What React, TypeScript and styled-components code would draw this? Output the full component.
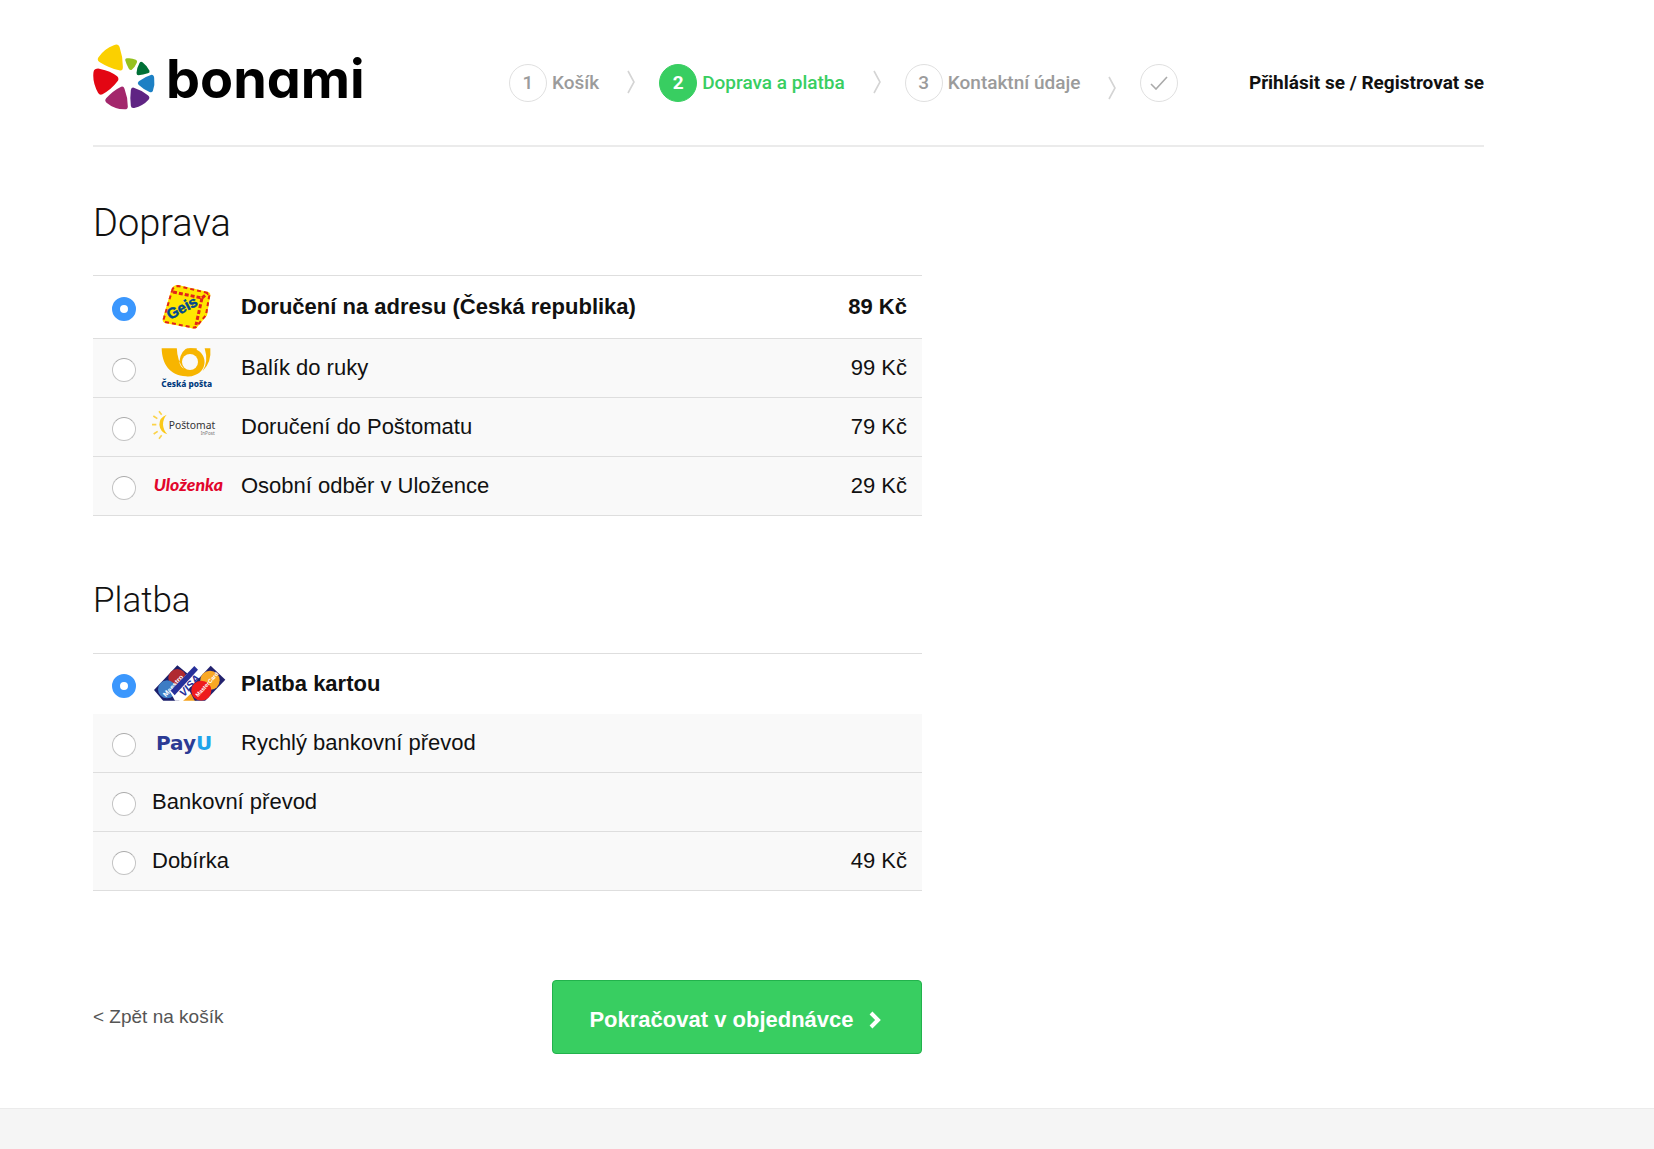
import React, { useState } from "react";
import styled, { createGlobalStyle } from "styled-components";

const GlobalStyle = createGlobalStyle`
  *, *::before, *::after { box-sizing: border-box; }
  html, body { margin: 0; background: #fff; }
  body {
    color: #111;
    font-family: "Liberation Sans", Arial, sans-serif;
    font-size: 22px;
    line-height: 28px;
  }
`;

const Page = styled.div`
  display: flex;
  flex-direction: column;
  min-height: 100vh;
`;

const Content = styled.div`
  padding: 0 170px 54px 93px;
`;

const Header = styled.header`
  display: flex;
  align-items: flex-start;
  padding: 44px 0 35px;
  border-bottom: 2px solid #ebebeb;
`;

const LogoLink = styled.a`
  display: flex;
  flex: none;
  align-items: center;
  gap: 10px;
  width: 271px;
  margin-right: 145px;
  color: #000;
  text-decoration: none;
`;

const Mark = styled.svg`
  flex: none;
  width: 63px;
  height: 66px;
`;

const Wordmark = styled.span`
  padding-top: 4px;
  font-family: Inter, sans-serif;
  font-feature-settings: "cv11";
  font-size: 54px;
  font-weight: 700;
  line-height: 60px;
`;

const Steps = styled.ol`
  display: flex;
  align-items: center;
  margin: 20px 0 0;
  padding: 0;
  list-style: none;
  font-family: Roboto, sans-serif;
  font-size: 19px;
  font-weight: 500;
  line-height: 28px;
`;

const Step = styled.li<{ $active?: boolean }>`
  display: flex;
  align-items: center;
  gap: 5px;
  color: ${(p) => (p.$active ? "#38ce61" : "#9b9b9b")};
  white-space: nowrap;
`;

const Bubble = styled.span<{ $active?: boolean }>`
  display: flex;
  align-items: center;
  justify-content: center;
  width: 38px;
  height: 38px;
  border: 1px solid ${(p) => (p.$active ? "#38ce61" : "#e0e0e0")};
  border-radius: 50%;
  background: ${(p) => (p.$active ? "#38ce61" : "#fff")};
  color: ${(p) => (p.$active ? "#fff" : "#9b9b9b")};
  font-weight: ${(p) => (p.$active ? 700 : 500)};
`;

const Separator = styled.svg<{ $low?: boolean }>`
  align-self: ${(p) => (p.$low ? "flex-end" : "center")};
  width: 8px;
  height: 24px;
  margin: 0 24px 2px 28px;
`;

const Login = styled.a`
  margin: 25px 0 0 auto;
  color: #111;
  font-family: Roboto, sans-serif;
  font-size: 19px;
  font-weight: 700;
  line-height: 28px;
  text-decoration: none;
  white-space: nowrap;
`;

const Form = styled.form`
  width: 60%;
  max-width: 829px;
`;

const Group = styled.section`
  padding-top: 52px;

  & + & {
    padding-top: 61px;
  }
`;

const Heading = styled.h2<{ $size: number }>`
  margin: 0;
  font-family: Roboto, sans-serif;
  font-size: ${(p) => p.$size}px;
  font-weight: 300;
  line-height: 48px;
`;

const Options = styled.div`
  margin-top: 28px;
  border-top: 1px solid #dedede;
`;

const Option = styled.label<{ $selected: boolean; $plain?: boolean; $height: number }>`
  display: flex;
  align-items: center;
  min-height: ${(p) => p.$height}px;
  padding: 0 15px 0 19px;
  border-bottom: ${(p) => (p.$plain ? "0" : "1px")} solid #dedede;
  background: ${(p) => (p.$selected ? "#fff" : "#f9f9f9")};
  font-weight: ${(p) => (p.$selected ? 700 : 400)};
  cursor: pointer;
`;

const Radio = styled.input`
  appearance: none;
  flex: none;
  width: 24px;
  height: 24px;
  margin: 3px 16px 0 0;
  border: 1px solid #c4c4c4;
  border-top-color: #aaa;
  border-radius: 50%;
  background: #fff;

  &:checked {
    border: 8px solid #3b97fd;
  }
`;

const Brand = styled.svg`
  flex: none;
  width: 72px;
  height: 48px;
  margin-right: 17px;
`;

const Price = styled.span`
  margin-left: auto;
`;

const Actions = styled.div`
  display: flex;
  align-items: center;
  justify-content: space-between;
  padding-top: 89px;
`;

const Back = styled.a`
  color: #555;
  font-size: 19px;
  text-decoration: none;
`;

const Submit = styled.button`
  display: flex;
  align-items: center;
  justify-content: center;
  gap: 15px;
  width: 370px;
  height: 74px;
  padding: 5px 4px 0 0;
  border: 1px solid #22b24c;
  border-radius: 4px;
  background: #38ce61;
  color: #fff;
  font: inherit;
  font-weight: 700;
  cursor: pointer;
`;

const Footer = styled.footer`
  flex: 1;
  border-top: 1px solid #ebebeb;
  background: #f5f5f5;
`;

const LogoMark = () => (
  <Mark viewBox="38 40 188 198" aria-hidden="true">
    <path fill="#fbd000" d="M100 44Q112 38 117 48Q128 80 127 113Q126 122 116 119Q85 112 58 95Q48 89 54 80Q72 54 100 44Z" />
    <path fill="#95c11f" d="M139 83Q153 81 166 87Q172 90 169 96Q164 108 154 117Q149 120 145 114Q137 100 134 88Q134 84 139 83Z" />
    <path fill="#007036" d="M186 95Q200 106 207 120Q209 126 202 128Q188 133 174 134Q168 134 168 127Q169 111 177 97Q181 91 186 95Z" />
    <path fill="#1d80c4" d="M213 132Q221 133 221 142Q224 162 217 181Q214 187 207 184Q189 176 174 162Q169 157 175 152Q192 138 213 132Z" />
    <path fill="#5f2483" d="M160 171Q181 177 202 194Q210 200 204 207Q188 225 161 232Q152 234 151 225Q148 201 151 178Q153 169 160 171Z" />
    <path fill="#a3276c" d="M122 168Q129 165 132 174Q142 200 142 228Q141 237 132 236Q101 235 78 216Q71 210 77 203Q97 180 122 168Z" />
    <path fill="#e30613" d="M44 116Q52 112 59 115Q90 121 110 137Q117 144 111 152Q93 176 66 191Q57 194 53 187Q35 155 39 124Q40 118 44 116Z" />
  </Mark>
);

const Arrow = ({ low }: { low?: boolean }) => (
  <Separator $low={low} viewBox="0 0 8 24" aria-hidden="true">
    <path d="M1 1L7 12L1 23" fill="none" stroke="#d4d4d4" strokeWidth="1.6" />
  </Separator>
);

const Geis = () => (
  <Brand viewBox="0 0 72 48" aria-hidden="true">
    <path
      d="M20 8Q21 3 26 3L56 10Q58 11 57 14L54 32L44 44Q42 45 39 44L13 39Q11 38 12 35Z"
      fill="#ffe600" stroke="#ffe600" strokeWidth="2"
    />
    <path
      d="M20 8Q21 3 26 3L56 10Q58 11 57 14L54 32L44 44Q42 45 39 44L13 39Q11 38 12 35Z"
      fill="none" stroke="#e2231a" strokeWidth="2" strokeDasharray="4 3"
    />
    <path d="M21 9L50 15L44 42M50 15L56 10" fill="none" stroke="#e2231a" strokeWidth="3" strokeDasharray="4 2" />
    <text
      x="18" y="37" transform="rotate(-28 18 37)" fill="#00488f"
      fontFamily="Liberation Sans" fontSize="15" fontWeight="700" stroke="#00488f" strokeWidth="0.5"
    >
      Geis
    </text>
  </Brand>
);

const CeskaPosta = () => (
  <Brand viewBox="216 492 216 144" aria-hidden="true">
    <path fill="#f7b500" d="M245 505H330A41 41 0 0 1 345 585Q332 591 318 589C268 586 246 552 245 505Z" />
    <circle cx="330" cy="546" r="24" fill="#f9f9f9" />
    <path d="M290 500H330Q301 510 298 545Q300 560 312 566Q292 548 290 500Z" fill="#f9f9f9" />
    <path fill="#f7b500" d="M330 505H350V511H318Z" />
    <path fill="#f7b500" d="M374 505H391Q395 548 368 573Q386 545 374 505Z" />
    <text x="244" y="621" fill="#003a7d" fontFamily="Noto Sans" fontSize="25" fontWeight="800">
      Česká pošta
    </text>
  </Brand>
);

const Postomat = () => (
  <Brand viewBox="216 69 216 144" aria-hidden="true">
    <path fill="#fbc91b" d="M260 104Q238 112 238 134Q240 156 262 163Q250 150 249 134Q249 116 260 104Z" />
    <path
      d="M237 94L245 104M220 108L232 116M216 134H229M221 162L233 154M237 176L245 166"
      stroke="#fbd34a" strokeWidth="5" fill="none"
    />
    <text x="266" y="147" fill="#333" fontFamily="Noto Sans" fontSize="31">Poštomat</text>
    <text x="362" y="164" fill="#777" fontFamily="Noto Sans" fontSize="14">InPost</text>
  </Brand>
);

const Ulozenka = () => (
  <Brand viewBox="216 246 216 144" aria-hidden="true">
    <text x="221" y="334" fill="#e2062c" fontFamily="Lato" fontSize="53" fontStyle="italic" fontWeight="900">
      Uloženka
    </text>
  </Brand>
);

const Cards = () => (
  <Brand viewBox="216 300 216 144" aria-hidden="true" overflow="visible">
    <clipPath id="cards-edge"><path d="M216 310H440V422H216Z" /></clipPath>
    <g clipPath="url(#cards-edge)" fontFamily="Liberation Sans" fontWeight="700">
      <path fill="#1b1f6b" d="M222 390L292 316L352 365L290 430H256Z" />
      <circle cx="292" cy="354" r="27" fill="#b02a30" />
      <circle cx="261" cy="388" r="27" fill="#3d7cc4" />
      <text x="258" y="412" transform="rotate(-48 258 412)" fill="#fff" fontSize="21">Maestro</text>
      <path fill="#fff" d="M343 318L376 350L308 424H286L270 395Z" />
      <path fill="#27309a" d="M343 318L354 329L284 406L272 392Z" />
      <path fill="#f5a21c" d="M308 424L340 394L350 424Z" />
      <text x="312" y="412" transform="rotate(-48 312 412)" fill="#27309a" fontSize="32" fontStyle="italic">VISA</text>
      <path fill="#23226e" d="M392 317L436 359L374 424H345L326 388Z" />
      <circle cx="390" cy="361" r="29" fill="#f9a825" />
      <circle cx="364" cy="392" r="30" fill="#ee1c1c" />
      <text x="354" y="412" transform="rotate(-48 354 412)" fill="#fff" fontSize="17">MasterCard</text>
    </g>
  </Brand>
);

const PayU = () => (
  <Brand viewBox="216 477 216 144" aria-hidden="true">
    <text x="228" y="569" fill="#2c3b94" fontFamily="DejaVu Sans" fontSize="60" fontWeight="700">
      Pay<tspan fill="#1ea3ea">U</tspan>
    </text>
  </Brand>
);

type Item = {
  id: string;
  label: string;
  price?: string;
  Logo?: React.ComponentType;
  height: number;
  plain?: boolean;
};

const shipping: Item[] = [
  { id: "geis", label: "Doručení na adresu (Česká republika)", price: "89 Kč", Logo: Geis, height: 63 },
  { id: "posta", label: "Balík do ruky", price: "99 Kč", Logo: CeskaPosta, height: 59 },
  { id: "postomat", label: "Doručení do Poštomatu", price: "79 Kč", Logo: Postomat, height: 59 },
  { id: "ulozenka", label: "Osobní odběr v Uložence", price: "29 Kč", Logo: Ulozenka, height: 59 },
];

const payment: Item[] = [
  { id: "karta", label: "Platba kartou", Logo: Cards, height: 60, plain: true },
  { id: "payu", label: "Rychlý bankovní převod", Logo: PayU, height: 59 },
  { id: "prevod", label: "Bankovní převod", height: 59 },
  { id: "dobirka", label: "Dobírka", price: "49 Kč", height: 59 },
];

type OptionGroupProps = { name: string; title: string; titleSize: number; items: Item[] };

const OptionGroup = ({ name, title, titleSize, items }: OptionGroupProps) => {
  const [selected, setSelected] = useState(items[0].id);
  return (
    <Group>
      <Heading id={`${name}-title`} $size={titleSize}>{title}</Heading>
      <Options role="radiogroup" aria-labelledby={`${name}-title`}>
        {items.map(({ id, label, price, Logo, height, plain }) => (
          <Option key={id} htmlFor={id} $selected={selected === id} $plain={plain} $height={height}>
            <Radio type="radio" id={id} name={name} checked={selected === id} onChange={() => setSelected(id)} />
            {Logo && <Logo />}
            <span>{label}</span>
            {price && <Price>{price}</Price>}
          </Option>
        ))}
      </Options>
    </Group>
  );
};

export default function App() {
  return (
    <>
      <GlobalStyle />
      <Page>
        <Content>
          <Header>
            <LogoLink href="#">
              <LogoMark />
              <Wordmark>bonami</Wordmark>
            </LogoLink>
            <Steps>
              <Step><Bubble>1</Bubble>Košík</Step>
              <Arrow />
              <Step $active aria-current="step"><Bubble $active>2</Bubble>Doprava a platba</Step>
              <Arrow />
              <Step><Bubble>3</Bubble>Kontaktní údaje</Step>
              <Arrow low />
              <Step>
                <Bubble>
                  <svg width="18" height="14" viewBox="0 0 18 14" aria-hidden="true">
                    <path d="M1 8L6 13L17 1" fill="none" stroke="#aaa" strokeWidth="1.6" />
                  </svg>
                </Bubble>
              </Step>
            </Steps>
            <Login href="#">Přihlásit se / Registrovat se</Login>
          </Header>
          <Form onSubmit={(e) => e.preventDefault()}>
            <OptionGroup name="doprava" title="Doprava" titleSize={38} items={shipping} />
            <OptionGroup name="platba" title="Platba" titleSize={35} items={payment} />
            <Actions>
              <Back href="#">&lt; Zpět na košík</Back>
              <Submit type="submit">
                Pokračovat v objednávce
                <svg width="12" height="18" viewBox="0 0 12 18" aria-hidden="true">
                  <path d="M2 2L9 9L2 16" fill="none" stroke="#fff" strokeWidth="4" />
                </svg>
              </Submit>
            </Actions>
          </Form>
        </Content>
        <Footer />
      </Page>
    </>
  );
}
